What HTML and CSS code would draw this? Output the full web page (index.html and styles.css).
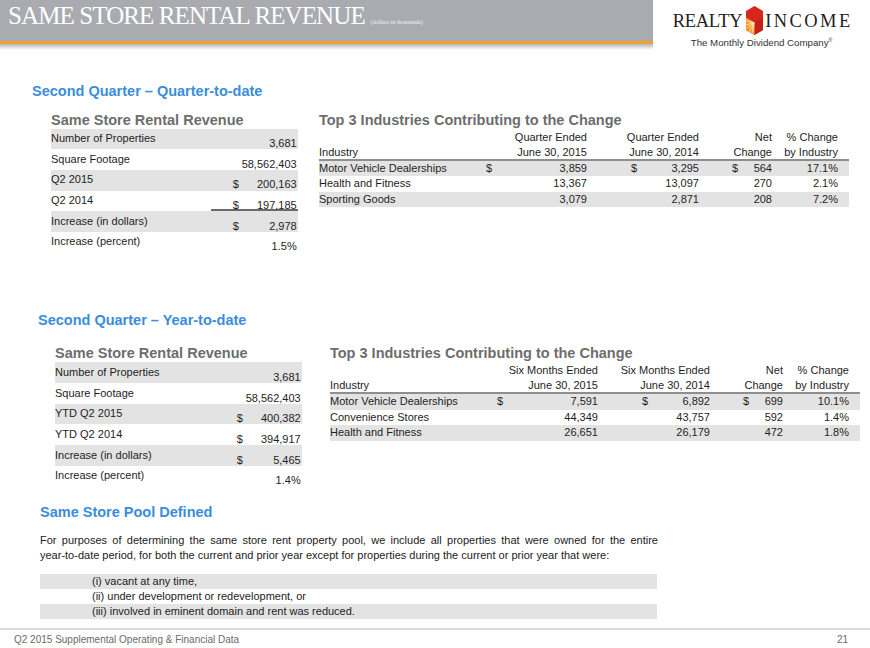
FILE: index.html
```html
<!DOCTYPE html>
<html>
<head>
<meta charset="utf-8">
<title>Same Store Rental Revenue</title>
<link rel="stylesheet" href="styles.css">
</head>
<body>
<header class="top">
  <div class="band">
    <div class="band-main">
      <h1 class="title">SAME STORE RENTAL REVENUE</h1>
      <span class="note">(dollars in thousands)</span>
    </div>
    <div class="band-rule"></div>
    <div class="band-shadow"></div>
  </div>
  <div class="logo">
    <div class="logo-row">
      <span class="logo-word">REALTY</span>
      <svg class="logo-mark" viewBox="0 0 17 29" aria-hidden="true">
        <defs>
          <linearGradient id="sun" x1="1" y1="0" x2="0" y2="1">
            <stop offset="0" stop-color="#ffe07a"/>
            <stop offset="0.45" stop-color="#f7a530"/>
            <stop offset="1" stop-color="#ee7a1e"/>
          </linearGradient>
          <clipPath id="sunclip">
            <polygon points="0,11.5 8.5,16.5 8.5,29 0,24"/>
          </clipPath>
        </defs>
        <polygon points="8.5,0 17,5 17,24 8.5,29 0,24 0,5" fill="#d8261c"/>
        <polygon points="8.5,16.5 17,11.5 17,24 8.5,29" fill="#c81f17"/>
        <polygon points="0,11.5 8.5,16.5 8.5,29 0,24" fill="url(#sun)"/>
        <g clip-path="url(#sunclip)" stroke="#fff" stroke-width="0.7" opacity="0.9">
          <line x1="8.5" y1="16.5" x2="0" y2="15"/>
          <line x1="8.5" y1="16.5" x2="0" y2="19"/>
          <line x1="8.5" y1="16.5" x2="0" y2="23"/>
          <line x1="8.5" y1="16.5" x2="2.5" y2="27"/>
          <line x1="8.5" y1="16.5" x2="5.5" y2="29"/>
        </g>
      </svg>
      <span class="logo-word logo-word-wide">INCOME</span>
    </div>
    <div class="tagline">The Monthly Dividend Company<span class="reg">®</span></div>
  </div>
</header>

<main>
  <section class="period period-q">
    <h2 class="section-title">Second Quarter – Quarter-to-date</h2>
    <div class="panels">
      <div class="summary">
        <h3 class="panel-title">Same Store Rental Revenue</h3>
        <div class="srow shade"><span class="slabel">Number of Properties</span><span class="sval"><span class="num">3,681</span></span></div>
        <div class="srow"><span class="slabel">Square Footage</span><span class="sval"><span class="num">58,562,403</span></span></div>
        <div class="srow shade"><span class="slabel">Q2 2015</span><span class="sval"><span>$</span><span class="num">200,163</span></span></div>
        <div class="srow"><span class="slabel">Q2 2014</span><span class="sval sval-ul"><span>$</span><span class="num">197,185</span></span></div>
        <div class="srow shade"><span class="slabel">Increase (in dollars)</span><span class="sval"><span>$</span><span class="num">2,978</span></span></div>
        <div class="srow"><span class="slabel">Increase (percent)</span><span class="sval"><span class="num">1.5%</span></span></div>
      </div>
      <div class="industries">
        <h3 class="panel-title">Top 3 Industries Contributing to the Change</h3>
        <div class="irow ihead1"><span></span><span class="r">Quarter Ended</span><span class="r">Quarter Ended</span><span class="r">Net</span><span class="r">% Change</span><span></span></div>
        <div class="irow ihead2"><span>Industry</span><span class="r">June 30, 2015</span><span class="r">June 30, 2014</span><span class="r">Change</span><span class="r">by Industry</span><span></span></div>
        <div class="irow idata shade"><span>Motor Vehicle Dealerships</span><span class="cell"><span>$</span><span class="num">3,859</span></span><span class="cell cell-b"><span>$</span><span class="num">3,295</span></span><span class="cell cell-c"><span>$</span><span class="num">564</span></span><span class="r">17.1%</span><span></span></div>
        <div class="irow idata"><span>Health and Fitness</span><span class="r">13,367</span><span class="r">13,097</span><span class="r">270</span><span class="r">2.1%</span><span></span></div>
        <div class="irow idata shade"><span>Sporting Goods</span><span class="r">3,079</span><span class="r">2,871</span><span class="r">208</span><span class="r">7.2%</span><span></span></div>
      </div>
    </div>
  </section>

  <section class="period period-ytd">
    <h2 class="section-title">Second Quarter – Year-to-date</h2>
    <div class="panels">
      <div class="summary">
        <h3 class="panel-title">Same Store Rental Revenue</h3>
        <div class="srow shade"><span class="slabel">Number of Properties</span><span class="sval"><span class="num">3,681</span></span></div>
        <div class="srow"><span class="slabel">Square Footage</span><span class="sval"><span class="num">58,562,403</span></span></div>
        <div class="srow shade"><span class="slabel">YTD Q2 2015</span><span class="sval"><span>$</span><span class="num">400,382</span></span></div>
        <div class="srow"><span class="slabel">YTD Q2 2014</span><span class="sval"><span>$</span><span class="num">394,917</span></span></div>
        <div class="srow shade"><span class="slabel">Increase (in dollars)</span><span class="sval"><span>$</span><span class="num">5,465</span></span></div>
        <div class="srow"><span class="slabel">Increase (percent)</span><span class="sval"><span class="num">1.4%</span></span></div>
      </div>
      <div class="industries">
        <h3 class="panel-title">Top 3 Industries Contributing to the Change</h3>
        <div class="irow ihead1"><span></span><span class="r">Six Months Ended</span><span class="r">Six Months Ended</span><span class="r">Net</span><span class="r">% Change</span><span></span></div>
        <div class="irow ihead2"><span>Industry</span><span class="r">June 30, 2015</span><span class="r">June 30, 2014</span><span class="r">Change</span><span class="r">by Industry</span><span></span></div>
        <div class="irow idata shade"><span>Motor Vehicle Dealerships</span><span class="cell"><span>$</span><span class="num">7,591</span></span><span class="cell cell-b"><span>$</span><span class="num">6,892</span></span><span class="cell cell-c"><span>$</span><span class="num">699</span></span><span class="r">10.1%</span><span></span></div>
        <div class="irow idata"><span>Convenience Stores</span><span class="r">44,349</span><span class="r">43,757</span><span class="r">592</span><span class="r">1.4%</span><span></span></div>
        <div class="irow idata shade"><span>Health and Fitness</span><span class="r">26,651</span><span class="r">26,179</span><span class="r">472</span><span class="r">1.8%</span><span></span></div>
      </div>
    </div>
  </section>

  <section class="pool">
    <h2 class="section-title">Same Store Pool Defined</h2>
    <p class="pool-text"><span class="jline">For purposes of determining the same store rent property pool, we include all properties that were owned for the entire</span>year-to-date period, for both the current and prior year except for properties during the current or prior year that were:</p>
    <ul class="pool-list">
      <li class="shade">(i) vacant at any time,</li>
      <li>(ii) under development or redevelopment, or</li>
      <li class="shade">(iii) involved in eminent domain and rent was reduced.</li>
    </ul>
  </section>
</main>

<footer class="footer">
  <span>Q2 2015 Supplemental Operating &amp; Financial Data</span>
  <span>21</span>
</footer>
</body>
</html>
```

FILE: styles.css
```css
* { box-sizing: border-box; }
html, body { margin: 0; padding: 0; background: #fff; }
body {
  width: 870px;
  height: 648px;
  overflow: hidden;
  font-family: "Liberation Sans", Arial, sans-serif;
  font-size: 11px;
  color: #1e1e1e;
}

/* header */
.top { display: flex; height: 50px; }
.band { width: 653px; display: flex; flex-direction: column; }
.band-main {
  height: 41px;
  background: #a9abb0;
  display: flex;
  align-items: baseline;
  padding: 1px 0 0 8px;
}
.title {
  margin: 0;
  font: normal 25px/30px "Liberation Serif", "Times New Roman", serif;
  letter-spacing: -0.9px;
  color: #fff;
  white-space: nowrap;
}
.note {
  margin-left: 6px;
  font: 6px/8px "Liberation Serif", serif;
  color: #f2f2f2;
  white-space: nowrap;
}
.band-rule { height: 3px; background: #f5a035; }
.band-shadow { height: 6px; background: linear-gradient(#b8b8b8, #fff); }

.logo {
  flex: 1;
  display: flex;
  flex-direction: column;
  align-items: center;
  padding-top: 6px;
}
.logo-row { display: flex; align-items: center; height: 29px; }
.logo-word {
  font: 18.5px/18px "Liberation Serif", "Times New Roman", serif;
  color: #231f20;
  letter-spacing: -0.3px;
}
.logo-word-wide { letter-spacing: 2.4px; margin-right: -2.4px; }
.logo-mark { width: 17px; height: 29px; margin: 0 2px 0 4px; }
.tagline {
  margin-top: 2px;
  font: 9.7px/11px "Liberation Sans", Arial, sans-serif;
  color: #333;
  white-space: nowrap;
}
.reg { font-size: 5px; vertical-align: 4px; line-height: 0; }

/* sections */
.period { display: flex; flex-direction: column; }
.period-q { padding: 32.5px 0 0 32px; }
.period-ytd { padding: 59.8px 0 0 38px; }
.section-title {
  margin: 0;
  font: bold 14.5px/17px "Liberation Sans", Arial, sans-serif;
  color: #3b8ddb;
  white-space: nowrap;
}
.panels { display: flex; align-items: flex-start; }
.period-q .panels { margin: 12px 0 0 19px; gap: 21.3px; }
.period-ytd .panels { margin: 16px 0 0 17px; gap: 28.3px; }
.panel-title {
  margin: 0;
  font: bold 14.5px/17px "Liberation Sans", Arial, sans-serif;
  color: #6d6d6d;
  white-space: nowrap;
}

.shade { background: #e3e3e3; }

/* summary table */
.summary { width: 246.7px; }
.srow { display: flex; height: 20.7px; }
.slabel { flex: 1; padding-top: 3.5px; line-height: 13px; white-space: nowrap; }
.sval {
  width: 87px;
  display: flex;
  padding: 8.5px 1px 0 22px;
  line-height: 12px;
  white-space: nowrap;
}
.sval-ul { border-bottom: 2px solid #6a6a6a; }
.num { margin-left: auto; }

/* industries table */
.industries { width: 530px; }
.irow {
  display: grid;
  grid-template-columns: 167px 101px 112px 73px 66px 11px;
  white-space: nowrap;
}
.ihead1 { height: 16px; line-height: 16px; }
.ihead2 { height: 16px; line-height: 14px; border-bottom: 2px solid #8e8e8e; }
.idata { height: 15.5px; line-height: 15.5px; }
.r { text-align: right; }
.cell { display: flex; }
.cell-b { padding-left: 44px; }
.cell-c { padding-left: 33px; }

/* pool */
.pool { padding: 17.8px 0 0 40px; }
.pool-text {
  margin: 12px 0 0;
  width: 618px;
  font-size: 11px;
  line-height: 15px;
  white-space: nowrap;
  color: #222;
}
.jline {
  display: block;
  white-space: normal;
  text-align: justify;
  text-align-last: justify;
}
.pool-list { list-style: none; margin: 10.5px 0 0; padding: 0; width: 617px; }
.pool-list li { height: 15px; line-height: 15px; padding-left: 52px; font-size: 11px; color: #222; }

/* footer */
.footer {
  margin-top: 9px;
  border-top: 2px solid #dcdcdc;
  display: flex;
  justify-content: space-between;
  padding: 3px 22px 0 14px;
  font-size: 10px;
  line-height: 14px;
  color: #6b6b6b;
}
```
